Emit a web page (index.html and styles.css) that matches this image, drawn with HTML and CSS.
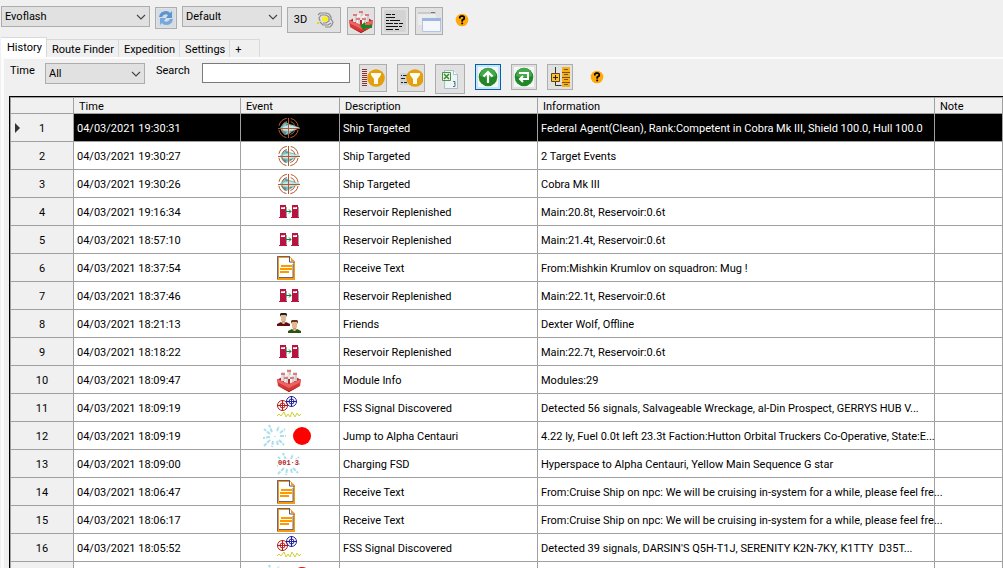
FILE: index.html
```
<!DOCTYPE html>
<html lang="en">
<head>
  <meta charset="UTF-8">
  <meta name="viewport" content="width=device-width, initial-scale=1.0">
  <title>History</title>
  <link rel="stylesheet" href="styles.css">
</head>
<body>
  <!-- Icon definitions -->
  <svg class="defs" aria-hidden="true">
    <symbol id="chevron" viewBox="0 0 10 6"><path d="M1 1l4 4 4-4" fill="none" stroke="#444" stroke-width="1.1"/></symbol>
    <symbol id="help" viewBox="0 0 14 14">
      <circle cx="7" cy="7" r="6.3" fill="#ffa90a"/>
      <path d="M4.8 5.4V4.2L6 3.2h2l1.2 1v1.5L7.2 7.2v1.6" fill="none" stroke="#000" stroke-width="1.7"/>
      <path d="M6.3 9.6h1.8v1.7H6.3z"/>
    </symbol>
    <symbol id="target" viewBox="0 0 24 24">
      <path d="M3 12l3-4 3-2 3 2 4 1 7 3-7 3-4 3-4 1-3-3z" fill="#7cc3c8"/>
      <path d="M6 11l5-2 12 3-11 3-6-1z" fill="#cfe2e2"/>
      <path d="M8 7l3 1-1 2zM6 15l4 1-2 2zM13 15l3 0-3 2z" fill="#4f9298"/>
      <g fill="none" stroke="#b2592f">
        <circle cx="11.5" cy="12" r="9.8" stroke-dasharray="11.4 4" stroke-dashoffset="-2"/>
        <circle cx="11.5" cy="12" r="6.8" stroke-dasharray="6.7 4" stroke-dashoffset="-2"/>
        <path d="M11.500 2v20M1 12.500h22"/>
      </g>
    </symbol>
    <symbol id="fuel" viewBox="0 0 24 24">
      <path d="M3 5h6v12h1v1H2v-1h1zM15 5h6v12h1v1h-8v-1h1z" fill="#b71540"/>
      <path d="M4 7h4v2H4zM16 7h4v2h-4z" fill="#fff"/>
      <path d="M4 7h3v1H4zM16 7h3v1h-3z" fill="#dcb0ba"/>
      <path d="M9.500 7v10M21.500 7v10" stroke="#a9a0a5"/>
      <path d="M8 11.500h6M12 9.500l2 2-2 2" fill="none" stroke="#15803a"/>
    </symbol>
    <symbol id="doc" viewBox="0 0 24 24">
      <path d="M1 1h11l5 5v17H1z" fill="#fff" stroke="#f79a12" stroke-width="2"/>
      <path d="M.5 23V.5H13M2 21.500h14V8" fill="none" stroke="#6b6470"/>
      <path d="M12.500 1v5h5" fill="#fff" stroke="#51537a"/>
      <path d="M14 2l3 3h-3z" fill="#f79a12"/>
      <path d="M4 10h11M3 13h12M3 16h9" stroke="#f90" stroke-width="2"/>
    </symbol>
    <symbol id="person" viewBox="0 0 13 13">
      <path d="M4 2h5v5L8 9H5L4 7z" fill="#e2b994"/>
      <path d="M5 8h3v3H5z" fill="#c99a75"/>
      <path d="M0 13v-2l4-2 2.500 2L9 9l4 2v2z" fill="currentColor"/>
      <path d="M5.500 9h2v2h-2z" fill="#e2b994"/>
    </symbol>
    <symbol id="friends" viewBox="0 0 24 24">
      <g color="#650d10"><use href="#person" x="0" y="1" width="13" height="13"/></g>
      <path d="M3 5V2l1-1h5l1 1v3L9 3H4z" fill="#222"/>
      <g color="#29520e"><use href="#person" x="11" y="8" width="13" height="13"/></g>
      <path d="M14 12V9l1-1h5l1 1v3l-1-2h-5z" fill="#633917"/>
    </symbol>
    <symbol id="module" viewBox="0 0 24 24">
      <path d="M0 12l5-3h14l5 3-12 8z" fill="#b52a2a"/>
      <path d="M4 4h4v9H4zM16 4h4v9h-4zM10 1h4v10h-4z" fill="#e6e2e2"/>
      <path d="M7 6h4v10H7zM13 6h4v10h-4z" fill="#f3f1f1"/>
      <path d="M7 5v8M19 5v8M13 3v4M10 8v8M16 8v8" stroke="#bdb4b4"/>
      <path d="M4 5h4v2H4zM16 5h4v2h-4zM10 2h4v2h-4zM7 9h4v2H7zM13 9h4v2h-4z" fill="#e07b7b"/>
      <path d="M0 11l12 5 12-5-1 7-11 6-11-6z" fill="#d93636"/>
      <path d="M0 11l12 5 12-5v3l-12 6-12-6z" fill="#ea6464"/>
      <path d="M1 18l11 5 11-5-11 6z" fill="#a51515"/>
    </symbol>
    <symbol id="fss" viewBox="0 0 24 24">
      <g fill="none">
        <g stroke="#b51b1b"><circle cx="5.500" cy="9.500" r="5"/><circle cx="5.500" cy="9.500" r="2.500"/><path d="M5.500 4v11M0 9.500h11"/></g>
        <g stroke="#20209c"><circle cx="14.500" cy="5.500" r="5"/><circle cx="14.500" cy="5.500" r="2.500"/><path d="M14.500 0v11M9 5.500h11"/></g>
        <path d="M0 20l2-2 2 2 3-4 2 5 2-3 2 3 2-5 3 5 2-4 2 3 2-2" stroke="#d2d232"/>
      </g>
    </symbol>
    <symbol id="burst" viewBox="0 0 24 24">
      <path d="M9 8L6 1M14 7l2-5M7 10L1 5M17 9l5-4M7 13l-7 1M17 12h6M7 16l-6 6M16 16l5 5M10 17l-1 6M14 17l1 4" fill="none" stroke="#a9e0eb" stroke-width="2" stroke-dasharray="4 1"/>
      <path d="M11 12h2v1h-2z" fill="#bdebf2"/>
    </symbol>
    <symbol id="star" viewBox="0 0 24 24"><circle cx="11" cy="12" r="9" fill="#f00"/></symbol>
    <symbol id="funnel" viewBox="0 0 18 18">
      <circle cx="9" cy="9" r="8.800" fill="#e3a00c"/>
      <path d="M4 4h10v2l-3 4v5H7v-5L4 6z" fill="#fffbee"/>
    </symbol>
    <symbol id="ball" viewBox="0 0 20 20">
      <path d="M0 0h20v20H0z" fill="#f4f8f4"/>
      <circle cx="10" cy="10" r="9.300" fill="#23872a"/>
      <path d="M2 9a8 8 0 0 1 16 0q-8 3-16 0z" fill="#45a84a"/>
    </symbol>
  </svg>

  <!-- Top toolbar -->
  <header class="toolbar">
    <div class="combo commander">
      <select aria-label="Commander"><option>Evoflash</option></select>
      <svg><use href="#chevron"/></svg>
    </div>
    <button class="btn small" aria-label="Refresh">
      <svg viewBox="0 0 18 18">
        <path d="M0 0h18v18H0z" fill="#d6dce4"/>
        <path d="M2 8q1-6 7-6 3 0 4 2l2-2v7H9l2-3q-4-2-6 2z" fill="#5b95d0"/>
        <path d="M16 10q-1 6-7 6-3 0-4-2l-2 2V9h6l-2 3q4 2 6-2z" fill="#75a9dc"/>
      </svg>
    </button>
    <div class="combo theme">
      <select aria-label="View"><option>Default</option></select>
      <svg><use href="#chevron"/></svg>
    </div>
    <button class="btn map">3D
      <svg viewBox="0 0 18 18">
        <ellipse cx="9" cy="8" rx="3" ry="2.500" fill="#ffef00"/>
        <g fill="none" stroke="#8c8c8c" stroke-width="1.200">
          <path d="M2 4l2-2h6l3 1 2 3v3"/><path d="M4 10l-1-3 2-3h5l3 2v4l-3 2H7"/>
          <path d="M4 11l3 3h5l3-2"/><path d="M9 16h5l2-2 1-3-2-3"/>
        </g>
        <path d="M1 11h2v2H1z" fill="#e5d800"/>
      </svg>
    </button>
    <button class="btn" aria-label="Module list">
      <svg viewBox="0 0 24 24"><use href="#module" width="24" height="24"/><path d="M11 17l5-4v3h7v3h-7v3z" fill="#128a1e"/></svg>
    </button>
    <button class="btn" aria-label="Log">
      <svg viewBox="0 0 24 24">
        <rect x="1" y="1" width="22" height="22" rx="2" fill="#d3d3d3"/>
        <path d="M3 5.500h5M9 5.500h3M3 8.500h9M3 11.500h3M7 11.500h10M3 14.500h7M11 14.500h4M16 14.500h4M3 17.500h12M16 17.500h3M3 20.500h7M12 20.500h4" stroke="#111"/>
      </svg>
    </button>
    <button class="btn" aria-label="Windows">
      <svg viewBox="0 0 24 24">
        <path d="M1 3h18v13H1z" fill="#ececec"/><path d="M1 3h18v2H1z" fill="#c9c9c9"/><path d="M14 3h4v1h-4z" fill="#777"/>
        <path d="M5.500 9.500h18v13h-18z" fill="#f4f6fb" stroke="#b4c4e3"/><path d="M5 9h19v3H5z" fill="#9db6e0"/>
      </svg>
    </button>
    <a href="#" class="help" aria-label="Help"><svg><use href="#help"/></svg></a>
  </header>

  <!-- Tabs -->
  <nav class="tabs">
    <a href="#" class="tab active">History</a>
    <a href="#" class="tab">Route Finder</a>
    <a href="#" class="tab">Expedition</a>
    <a href="#" class="tab">Settings</a>
    <a href="#" class="tab add">+</a>
  </nav>

  <main class="page">
    <!-- Filter bar -->
    <div class="filters">
      <label for="time">Time</label>
      <div class="combo period">
        <select id="time"><option>All</option></select>
        <svg><use href="#chevron"/></svg>
      </div>
      <label for="search">Search</label>
      <input type="text" id="search">
      <div class="actions">
        <button class="btn" aria-label="Event filter">
          <svg viewBox="0 0 24 24"><path d="M3.500 3v18" stroke="#8c2f2f" stroke-width="5" stroke-dasharray="1 1"/><use href="#funnel" x="6" y="3" width="18" height="18"/></svg>
        </button>
        <button class="btn" aria-label="Field filter">
          <svg viewBox="0 0 24 24"><path d="M1 7h8v12H1z" fill="#d2d2d2"/><path d="M2 9.500h1M4 9.500h4M2 12.500h4M2 16.500h2M5 16.500h3" stroke="#222"/><use href="#funnel" x="7" y="3" width="18" height="18"/></svg>
        </button>
        <button class="btn large" aria-label="Export to Excel">
          <svg viewBox="0 0 24 24">
            <path d="M6.500 3.500h9l4 4v14h-13z" fill="#eff4f7" stroke="#a7bfc8"/><path d="M15.500 3.500v4h4" fill="#fff" stroke="#a7bfc8"/>
            <path d="M4.500 5.500h8v8h-8z" fill="#e8f4e4" stroke="#4e9147"/><path d="M6 7l5 5M11 7l-5 5" stroke="#3c8a35" stroke-width="1.500"/>
            <path d="M15 14.500h2v2h-1M17 16.500v3h-2" fill="none" stroke="#587180"/>
          </svg>
        </button>
        <button class="btn medium focused" aria-label="Track latest">
          <svg viewBox="0 0 20 20"><use href="#ball" width="20" height="20"/><path d="M10 16V5M5.500 9.500L10 5l4.500 4.500" fill="none" stroke="#fff" stroke-width="2.200"/></svg>
        </button>
        <button class="btn medium" aria-label="Wrap rows">
          <svg viewBox="0 0 20 20"><use href="#ball" width="20" height="20"/><path d="M5 6h9v6H7M9 9l-3 3 3 3" fill="none" stroke="#fff" stroke-width="2"/></svg>
        </button>
        <button class="btn medium" aria-label="Expand">
          <svg viewBox="0 0 20 20">
            <path d="M5.500 0v6M5.500 15v3.500h6" fill="none" stroke="#333"/>
            <path d="M1.500 6.500h8v8h-8z" fill="#ffc02c" stroke="#604510"/><path d="M5.500 8v5M3 10.500h5" stroke="#222"/>
            <path d="M12 0h8v20h-8z" fill="#f5ae1c"/><path d="M12 5.500h8M12 10.500h8M12 15.500h8M14 2.500h4M14 7.500h4M14 12.500h4M14 17.500h4" stroke="#7a560e"/>
          </svg>
        </button>
      </div>
      <a href="#" class="help" aria-label="Help"><svg><use href="#help"/></svg></a>
    </div>

    <!-- Journal grid -->
    <div class="grid">
      <table>
        <colgroup>
          <col class="c-num"><col class="c-time"><col class="c-event"><col class="c-desc"><col class="c-info"><col>
        </colgroup>
        <thead>
          <tr><th></th><th>Time</th><th>Event</th><th>Description</th><th>Information</th><th>Note</th></tr>
        </thead>
        <tbody>
          <tr class="selected"><th>1</th><td>04/03/2021 19:30:31</td><td><svg><use href="#target"/></svg></td><td>Ship Targeted</td><td>Federal Agent(Clean), Rank:Competent in Cobra Mk III, Shield 100.0, Hull 100.0</td><td></td></tr>
          <tr><th>2</th><td>04/03/2021 19:30:27</td><td><svg><use href="#target"/></svg></td><td>Ship Targeted</td><td>2 Target Events</td><td></td></tr>
          <tr><th>3</th><td>04/03/2021 19:30:26</td><td><svg><use href="#target"/></svg></td><td>Ship Targeted</td><td>Cobra Mk III</td><td></td></tr>
          <tr><th>4</th><td>04/03/2021 19:16:34</td><td><svg><use href="#fuel"/></svg></td><td>Reservoir Replenished</td><td>Main:20.8t, Reservoir:0.6t</td><td></td></tr>
          <tr><th>5</th><td>04/03/2021 18:57:10</td><td><svg><use href="#fuel"/></svg></td><td>Reservoir Replenished</td><td>Main:21.4t, Reservoir:0.6t</td><td></td></tr>
          <tr><th>6</th><td>04/03/2021 18:37:54</td><td><svg><use href="#doc"/></svg></td><td>Receive Text</td><td>From:Mishkin Krumlov on squadron: Mug !</td><td></td></tr>
          <tr><th>7</th><td>04/03/2021 18:37:46</td><td><svg><use href="#fuel"/></svg></td><td>Reservoir Replenished</td><td>Main:22.1t, Reservoir:0.6t</td><td></td></tr>
          <tr><th>8</th><td>04/03/2021 18:21:13</td><td><svg><use href="#friends"/></svg></td><td>Friends</td><td>Dexter Wolf, Offline</td><td></td></tr>
          <tr><th>9</th><td>04/03/2021 18:18:22</td><td><svg><use href="#fuel"/></svg></td><td>Reservoir Replenished</td><td>Main:22.7t, Reservoir:0.6t</td><td></td></tr>
          <tr><th>10</th><td>04/03/2021 18:09:47</td><td><svg><use href="#module"/></svg></td><td>Module Info</td><td>Modules:29</td><td></td></tr>
          <tr><th>11</th><td>04/03/2021 18:09:19</td><td><svg><use href="#fss"/></svg></td><td>FSS Signal Discovered</td><td>Detected 56 signals, Salvageable Wreckage, al-Din Prospect, GERRYS HUB V...</td><td></td></tr>
          <tr><th>12</th><td>04/03/2021 18:09:19</td><td><svg><use href="#burst"/></svg><svg><use href="#star"/></svg></td><td>Jump to Alpha Centauri</td><td>4.22 ly, Fuel 0.0t left 23.3t Faction:Hutton Orbital Truckers Co-Operative, State:E...</td><td></td></tr>
          <tr><th>13</th><td>04/03/2021 18:09:00</td><td><span class="charging"><svg><use href="#burst"/></svg><span class="counter">001·3</span></span></td><td>Charging FSD</td><td>Hyperspace to Alpha Centauri, Yellow Main Sequence G star</td><td></td></tr>
          <tr><th>14</th><td>04/03/2021 18:06:47</td><td><svg><use href="#doc"/></svg></td><td>Receive Text</td><td>From:Cruise Ship on npc: We will be cruising in-system for a while, please feel fre...</td><td></td></tr>
          <tr><th>15</th><td>04/03/2021 18:06:17</td><td><svg><use href="#doc"/></svg></td><td>Receive Text</td><td>From:Cruise Ship on npc: We will be cruising in-system for a while, please feel fre...</td><td></td></tr>
          <tr><th>16</th><td>04/03/2021 18:05:52</td><td><svg><use href="#fss"/></svg></td><td>FSS Signal Discovered</td><td>Detected 39 signals, DARSIN'S Q5H-T1J, SERENITY K2N-7KY, K1TTY&nbsp; D35T...</td><td></td></tr>
          <tr><th></th><td></td><td><svg><use href="#burst"/></svg><svg><use href="#star"/></svg></td><td></td><td></td><td></td></tr>
        </tbody>
      </table>
    </div>
  </main>
</body>
</html>
```
FILE: styles.css
```
* {
  box-sizing: border-box;
}
body {
  font-family: Roboto, "Liberation Sans", sans-serif;
  font-size: 11px;
  line-height: 14px;
  color: #000;
  background-color: #f0f0f0;
  margin: 0;
  height: 100vh;
  display: flex;
  flex-direction: column;
  overflow: hidden;
}
a {
  color: inherit;
  text-decoration: none;
}
.defs {
  position: absolute;
  width: 0;
  height: 0;
}

/* Controls */
.combo {
  position: relative;
}
.combo select {
  appearance: none;
  width: 100%;
  height: 21px;
  padding: 0 3px;
  font: inherit;
  color: inherit;
  background-color: #e1e1e1;
  border: 1px solid #adadad;
  border-radius: 0;
}
.combo svg {
  position: absolute;
  right: 4px;
  top: 8px;
  width: 10px;
  height: 6px;
  pointer-events: none;
}
.btn {
  display: flex;
  align-items: center;
  justify-content: center;
  width: 28px;
  height: 28px;
  padding: 0;
  font: inherit;
  color: inherit;
  background-color: #e1e1e1;
  border: 1px solid #adadad;
}
.btn svg {
  width: 24px;
  height: 24px;
}
.btn.small {
  width: 22px;
  height: 22px;
}
.btn.small svg {
  width: 18px;
  height: 18px;
}
.btn.medium {
  width: 26px;
  height: 26px;
}
.btn.medium svg {
  width: 20px;
  height: 20px;
}
.btn.large {
  width: 30px;
  height: 30px;
}
.btn.focused {
  border-color: #0063b1;
  background-color: #cce4f7;
}
.btn.map {
  width: 54px;
  height: 26px;
  gap: 9px;
}
.btn.map svg {
  width: 18px;
  height: 18px;
}
.help svg {
  display: block;
  width: 14px;
  height: 14px;
}

/* Top toolbar */
.toolbar {
  display: flex;
  align-items: flex-start;
  gap: 6px;
  height: 37px;
  padding: 7px 1px 0;
}
.toolbar .combo {
  margin-top: -1px;
}
.toolbar .btn.small {
  margin: 0 -1px;
}
.toolbar .btn.map {
  margin-left: -1px;
}
.toolbar .help {
  margin: 6px 0 0 6px;
}
.commander {
  width: 149px;
}
.theme {
  width: 100px;
}

/* Tabs */
.tabs {
  display: flex;
  align-items: flex-end;
  height: 20px;
  padding-left: 1px;
}
.tab {
  height: 18px;
  padding: 3px 4px 0 5px;
  border: 1px solid #d9d9d9;
  border-left: none;
  border-bottom: none;
}
.tab.active {
  height: 20px;
  padding: 3px 4px 0 6px;
  background-color: #fff;
}
.tab.add {
  width: 30px;
}

/* Tab page */
.page {
  flex: 1;
  min-height: 0;
  display: flex;
  flex-direction: column;
  margin-left: 1px;
  border-left: 3px solid #fcfcfc;
  border-top: 2px solid #fcfcfc;
}
.filters {
  display: flex;
  align-items: flex-start;
  height: 37px;
  padding: 4px 6px 0;
}
.filters label {
  width: 35px;
  padding-top: 1px;
}
.filters label[for="search"] {
  width: 46px;
  margin-left: 11px;
}
.period {
  width: 100px;
}
.filters input {
  width: 148px;
  height: 20px;
  font: inherit;
  background-color: #fff;
  border: 1px solid #7a7a7a;
}
.actions {
  display: flex;
  align-items: flex-start;
  gap: 10px;
  margin: 1px 17px 0 9px;
}
.filters .help {
  margin-top: 7px;
}

/* Journal grid */
.grid {
  flex: 1;
  min-height: 0;
  margin-left: 5px;
  overflow: hidden;
  background-color: #fff;
  border-left: 1px solid #000;
  border-top: 1px solid #000;
}
table {
  width: 100%;
  table-layout: fixed;
  border-collapse: separate;
  border-spacing: 0;
  border-left: 1px solid #a0a0a0;
  border-top: 1px solid #a0a0a0;
}
.c-num {
  width: 63px;
}
.c-time {
  width: 167px;
}
.c-event {
  width: 99px;
}
.c-desc {
  width: 198px;
}
.c-info {
  width: 397px;
}
th,
td {
  padding: 2px 0 0 3px;
  font-weight: normal;
  text-align: left;
  white-space: nowrap;
  border-right: 1px solid #a0a0a0;
  border-bottom: 1px solid #a0a0a0;
}
th {
  background-color: #f0f0f0;
}
thead th {
  height: 16px;
  padding: 2px 5px 0;
  line-height: 13px;
}
tbody th {
  position: relative;
  padding-right: 3px;
  text-align: center;
}
tbody tr {
  height: 28px;
}
td:nth-child(3) {
  padding: 0 5px 0 3px;
  text-align: center;
}
td svg {
  width: 24px;
  height: 24px;
  vertical-align: middle;
}
td svg + svg {
  margin-left: 4px;
}
.selected td {
  color: #fff;
  background-color: #000;
}
.selected th::before {
  content: "";
  position: absolute;
  left: 4px;
  top: 9px;
  border: 5px solid transparent;
  border-left-color: #333;
  border-right: none;
}
.charging {
  position: relative;
  display: inline-block;
}
.counter {
  position: absolute;
  left: 1px;
  top: 7px;
  font: bold 7px/8px "Liberation Mono", monospace;
  color: #b01c1c;
  background-color: #fff;
}
```
